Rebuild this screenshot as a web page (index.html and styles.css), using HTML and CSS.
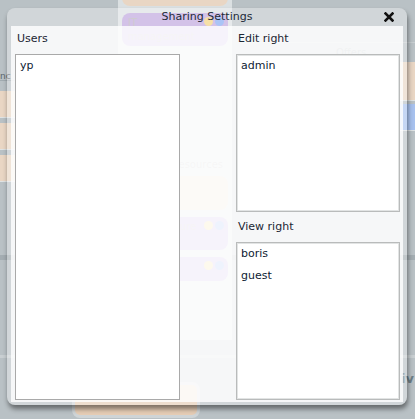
FILE: index.html
```html
<!DOCTYPE html>
<html lang="en">
<head>
    <meta charset="UTF-8">
    <meta name="viewport" content="width=device-width, initial-scale=1.0">
    <title>Sharing Settings</title>
    <link rel="stylesheet" href="styles.css">
</head>
<body>
    <!-- Board behind the modal -->
    <div class="board">
        <div class="lane lane-left">
            <div class="lane-caption">nc</div>
            <div class="row peach"></div>
            <div class="row peach"></div>
            <div class="row peach"></div>
        </div>
        <div class="lane lane-mid">
            <div class="card peach card-top"></div>
            <div class="card purple">IT<br>management
                <span class="dots"><i class="dot yellow"></i><i class="dot blue"></i></span>
            </div>
            <div class="group-title">Resources</div>
            <div class="card peach">Finance &amp;<br>control</div>
            <div class="card purple">Infrastructure
                <span class="dots"><i class="dot yellow"></i><i class="dot blue"></i></span>
            </div>
            <div class="card purple card-short">
                <span class="dots"><i class="dot yellow"></i><i class="dot blue"></i></span>
            </div>
        </div>
        <div class="lane lane-right">
            <div class="lane-title">Offers</div>
            <div class="row peach tall"></div>
            <div class="row blue"></div>
            <div class="lane-end">iv</div>
        </div>
    </div>
    <div class="bottom-card">fulfillment</div>

    <!-- Sharing dialog -->
    <div class="dialog">
        <div class="dialog-title">
            Sharing Settings
            <svg class="close" width="10" height="10" viewBox="0 0 10 10">
                <path d="M1.5 1.5 L8.5 8.5 M8.5 1.5 L1.5 8.5" stroke="#111" stroke-width="2.6" stroke-linecap="square"/>
            </svg>
        </div>
        <div class="panel">
            <div class="col">
                <div class="label">Users</div>
                <div class="list">
                    <div class="item">yp</div>
                </div>
            </div>
            <div class="col">
                <div class="label">Edit right</div>
                <div class="list soft">
                    <div class="item">admin</div>
                </div>
                <div class="label second">View right</div>
                <div class="list soft">
                    <div class="item">boris</div>
                    <div class="item">guest</div>
                </div>
            </div>
        </div>
    </div>
</body>
</html>
```

FILE: styles.css
```css
body {
    margin: 0;
    width: 415px;
    height: 419px;
    overflow: hidden;
    position: relative;
    font-family: "DejaVu Sans", Verdana, sans-serif;
    font-size: 11px;
    background: #b9c1c5;
    background-image: linear-gradient(to bottom,
        transparent 255px, #a4adb2 255px, #a4adb2 260px, transparent 260px,
        transparent 355px, #c9cfd2 355px, #c9cfd2 358px, transparent 358px);
}
.board {
    display: flex;
    height: 419px;
}
.lane-left {
    width: 112px;
    padding-top: 72px;
    box-sizing: border-box;
}
.lane-caption {
    height: 8px;
    font-size: 9px;
    line-height: 8px;
    color: #5a666d;
    border-bottom: 1px solid #a1abb0;
    margin-bottom: 10px;
}
.row {
    height: 26px;
    margin-bottom: 5px;
    border-bottom: 1px solid #dfe3e4;
}
.peach {
    background: #e9d6c4;
}
.blue {
    background: #a7c1ee;
}
.tall {
    height: 38px;
    margin-bottom: 3px;
}
.lane-mid {
    width: 114px;
    margin-left: 6px;
    padding: 0 4px;
    box-sizing: border-box;
    background: #dbe0e2;
    height: 340px;
}
.card {
    border-radius: 8px;
    padding: 3px 6px;
    color: #b5b0b8;
    font-size: 10px;
    line-height: 14px;
    position: relative;
    margin-bottom: 7px;
}
.card-top {
    margin-top: -12px;
    height: 12px;
}
.purple {
    background: #bca3dc;
    height: 27px;
}
.card-short {
    height: 18px;
}
.dots {
    position: absolute;
    right: 4px;
    top: 4px;
    display: flex;
    gap: 2px;
}
.dot {
    width: 9px;
    height: 9px;
    border-radius: 50%;
}
.dot.yellow {
    background: #f2d07a;
}
.dot.blue {
    background: #7fa6f2;
}
.group-title {
    margin: 113px 0 6px;
    padding-left: 50px;
    color: #b9b9b9;
    font-size: 10px;
}
.lane-right {
    flex: 1;
    margin-left: 8px;
    padding-top: 42px;
}
.lane-title {
    border-top: 1px solid #c8ced1;
    padding: 4px 0 4px 96px;
    color: #8e999e;
    font-size: 10px;
}
.lane-end {
    margin-top: 240px;
    text-align: right;
    color: #6e7f88;
    font-size: 13px;
    font-weight: bold;
    padding-right: 1px;
}
.bottom-card {
    position: absolute;
    left: 72px;
    top: 382px;
    width: 110px;
    height: 30px;
    padding: 0 6px;
    background: #e6cdb5;
    border: 3px solid #cfd4d6;
    border-radius: 8px;
    color: #9a8f86;
    font-size: 10px;
}

/* Modal */
.dialog {
    position: absolute;
    left: 7px;
    top: 8px;
    width: 400px;
    height: 397px;
    box-sizing: border-box;
    padding: 0 4px 3px;
    display: flex;
    flex-direction: column;
    background: rgba(255, 255, 255, 0.34);
    border-radius: 8px;
    box-shadow: 1px 4px 5px rgba(0, 0, 0, 0.45);
}
.dialog-title {
    height: 18px;
    line-height: 18px;
    text-align: center;
    color: #1d2a38;
    position: relative;
}
.close {
    position: absolute;
    right: 9px;
    top: 4px;
}
.panel {
    flex: 1;
    display: grid;
    grid-template-columns: 165px 164px;
    column-gap: 56px;
    padding: 6px 3px 2px 4px;
    background: rgba(255, 255, 255, 0.8);
}
.col {
    display: flex;
    flex-direction: column;
}
.label {
    line-height: 13px;
    padding-left: 2px;
    margin-bottom: 9px;
    color: #1b2633;
}
.label.second {
    margin-top: 8px;
}
.list {
    flex: 1;
    background: #fff;
    border: 1px solid #a9a9a9;
}
.list.soft {
    border-color: #b9bbbb;
    box-shadow: inset 0 0 0 1px #e2e4e4;
}
.item {
    line-height: 22px;
    padding-left: 4px;
    color: #0e2233;
}
```
